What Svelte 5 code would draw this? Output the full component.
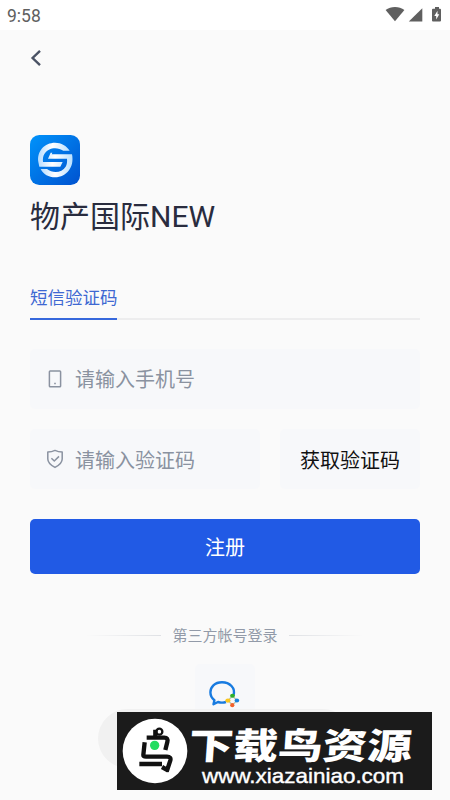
<script>
  const thirdParty = '第三方帐号登录';
</script>

<div class="screen">
  <header class="status">
    <span>9:58</span>
    <svg width="60" height="20" viewBox="0 0 60 20" fill="#5f5f5f">
      <path d="M3.6 3.9C8.8 0 17.2 0 22.4 3.9L13 15.2Z" />
      <path d="M40.3 2.2V15.5H26.8Z" />
      <path d="M51 2.7H53V1H57V2.7H58Q59 2.7 59 3.7V14.6Q59 15.6 58 15.6H51Q50 15.6 50 14.6V3.7Q50 2.7 51 2.7Z" />
      <path d="M55.5 4.7L52.3 10H54.2V13.6L57.3 8.2H55.5Z" fill="#fff" />
    </svg>
  </header>

  <main>
    <nav>
      <svg width="12" height="18" viewBox="0 0 12 18" fill="none" stroke="#4a5264" stroke-width="2.4">
        <path d="M10 1.8L2.6 9L10 16.2" />
      </svg>
    </nav>

    <svg class="logo" width="50" height="50" viewBox="30 30 150 150">
      <defs>
        <linearGradient id="tile" x1="0" y1="0" x2="1" y2="1">
          <stop offset="0" stop-color="#0093fb" />
          <stop offset="1" stop-color="#0052cf" />
        </linearGradient>
        <linearGradient id="mark" x1="0" y1="0" x2="1" y2="0">
          <stop offset="0" stop-color="#b4dcff" />
          <stop offset="0.45" stop-color="#fff" />
          <stop offset="1" stop-color="#b9e0ff" />
        </linearGradient>
      </defs>
      <rect x="30" y="30" width="150" height="150" rx="28" fill="url(#tile)" />
      <path fill="url(#mark)" d="M55 111C50 78 74 53 105 53C124 53 140 62 149 77H130C112 65 85 67 73 87C69 94 68 103 69 111H128L121 125H58Z" />
      <path fill="url(#mark)" d="M156 88C164 126 140 157 105 157C86 157 70 148 62 132H81C98 146 126 144 137 125C141 118 142 109 141 101H84L92 83H97L95 88Z" />
    </svg>
    <h1>物产国际NEW</h1>

    <div class="tabs"><span>短信验证码</span></div>

    <label class="field phone">
      <svg width="20" height="20" viewBox="0 0 20 20" fill="none" stroke="#8a92a0" stroke-width="1.5">
        <rect x="4.4" y="2" width="11.2" height="15.7" rx="0.8" />
        <path d="M9.2 14.5H10.8" />
      </svg>
      <span>请输入手机号</span>
    </label>

    <div class="row">
      <label class="field">
        <svg width="20" height="20" viewBox="0 0 20 20" fill="none" stroke="#8a92a0" stroke-width="1.5" stroke-linejoin="round">
          <path d="M10 1.4Q13.3 3 17.2 3V10C17.2 14.2 13.8 16.4 10 18.4C6.2 16.4 2.8 14.2 2.8 10V3Q6.7 3 10 1.4Z" />
          <path d="M6.4 9.2L9.3 12L14 7.4" />
        </svg>
        <span class="hint">请输入验证码</span>
      </label>
      <button class="code">获取验证码</button>
    </div>

    <button class="submit">注册</button>

    <div class="divider"><i></i><span>{thirdParty}</span><i class="right"></i></div>

    <div class="wecom">
      <svg width="34" height="30" viewBox="0 0 34 30" fill="none">
        <path d="M26.4 16.5C29 9 22.5 3.2 15 3.2C7.5 3.2 3.4 8.2 3.4 13.3C3.4 17 5 19.4 7.4 21.2L6.5 25.3L11 23Q15 24.2 19 23" stroke="#187be0" stroke-width="2.4" stroke-linejoin="round" />
        <path d="M21 21.5L25.5 17L30 21.5L25.5 26Z" stroke="#b9c7b0" stroke-width="1.4" />
        <ellipse cx="25.5" cy="16.8" rx="2.4" ry="2" fill="#30ae28" />
        <ellipse cx="29.9" cy="21.6" rx="2.3" ry="2" fill="#1683df" />
        <ellipse cx="25.3" cy="26.2" rx="2.1" ry="2.1" fill="#f2612b" />
        <ellipse cx="20.9" cy="21.6" rx="2.6" ry="2.1" fill="#fac51d" />
      </svg>
    </div>
  </main>

  <div class="toast"></div>
  <aside class="banner">
    <svg width="66" height="66" viewBox="96 58 198 198" fill="none" stroke="#111" stroke-width="13">
      <circle cx="195" cy="157" r="97" fill="#fff" stroke="none" />
      <circle cx="208" cy="99" r="9" stroke-width="7" />
      <path d="M196 93V116M170 117H223Q235 117 232 130L226 154" />
      <path d="M164 131L160 169Q160 174 168 174H231Q244 174 241 185L230 219M148 196H216M216 205L235 216" />
      <circle cx="194" cy="140" r="14" fill="#22dd60" stroke="none" />
    </svg>
    <svg width="240" height="78" viewBox="0 0 240 78">
      <text class="name" transform="translate(0 47) skewX(-4)" textLength="223" lengthAdjust="spacingAndGlyphs">下载鸟资源</text>
      <text class="site" x="14" y="71" textLength="202" lengthAdjust="spacingAndGlyphs">www.xiazainiao.com</text>
    </svg>
  </aside>
</div>

<style>
  .screen {
    position: relative;
    width: 450px;
    height: 800px;
    overflow: hidden;
    background: #fafafa;
    font-family: "Noto Sans CJK SC", sans-serif;
  }
  .status {
    display: flex;
    justify-content: space-between;
    box-sizing: border-box;
    height: 30px;
    padding: 5px 8px 0 7px;
    background: #fff;
    color: #606060;
    font: 400 17.5px/22px Roboto, sans-serif;
  }
  .status svg { margin-top: 1px; }
  main { padding: 0 30px; }
  nav { height: 105px; }
  nav svg { display: block; padding-top: 19px; }
  svg { display: block; flex: none; }
  h1 {
    margin: 10px 0 0;
    height: 44px;
    color: #292c3e;
    font-family: Roboto, "Noto Sans CJK SC", sans-serif;
    font-size: 30px;
    font-weight: 400;
    line-height: 44px;
    white-space: nowrap;
  }
  .tabs {
    height: 80px;
    box-sizing: border-box;
    margin-top: 1px;
    padding-top: 42px;
    border-bottom: 2px solid #ededee;
  }
  .tabs span {
    display: block;
    width: 87px;
    height: 38px;
    box-sizing: border-box;
    border-bottom: 2px solid #3768dc;
    color: #3e68d2;
    font-size: 17.5px;
    line-height: 29px;
    white-space: nowrap;
  }
  .field {
    display: flex;
    align-items: center;
    box-sizing: border-box;
    height: 60px;
    padding-left: 15px;
    gap: 10px;
    border-radius: 5px;
    background: #f7f8fa;
    color: #8a92a0;
    font-size: 20px;
    white-space: nowrap;
  }
  .field span { padding-bottom: 2px; }
  .field .hint { padding-bottom: 0; }
  .phone { margin-top: 29px; }
  .row { display: flex; gap: 20px; margin-top: 20px; }
  .row .field { width: 230px; }
  button {
    border: 0;
    padding: 0;
    border-radius: 5px;
    font-family: inherit;
    font-size: 20px;
  }
  .code { flex: 1; background: #f7f8fa; color: #111; }
  .submit {
    display: block;
    width: 100%;
    height: 55px;
    margin-top: 30px;
    background: #215ae5;
    color: #fff;
  }
  .divider {
    display: flex;
    align-items: center;
    justify-content: center;
    gap: 11px;
    height: 24px;
    margin-top: 49px;
    color: #929aa8;
    font-size: 15px;
  }
  .divider span { padding-bottom: 2px; }
  i { width: 75px; height: 1px; background: linear-gradient(90deg, #fafafa, #dfe1e5); }
  .right { background: linear-gradient(270deg, #fafafa, #dfe1e5); }
  .wecom {
    width: 60px;
    height: 60px;
    box-sizing: border-box;
    margin: 17px auto 0;
    padding: 15px 0 0 12px;
    border-radius: 5px;
    background: #f7f8fa;
  }
  .toast {
    position: absolute;
    left: 98px;
    top: 709px;
    width: 254px;
    height: 59px;
    border-radius: 30px;
    background: #f1f1f1;
  }
  .banner {
    position: absolute;
    left: 117px;
    top: 712px;
    display: flex;
    align-items: center;
    box-sizing: border-box;
    width: 315px;
    height: 78px;
    padding-left: 5px;
    background: #1b1b1b;
  }
  text { fill: #fff; }
  .name { font-size: 36px; font-weight: 900; }
  .site { font: 21px "Liberation Sans", sans-serif; stroke: #fff; stroke-width: .4px; }
</style>
